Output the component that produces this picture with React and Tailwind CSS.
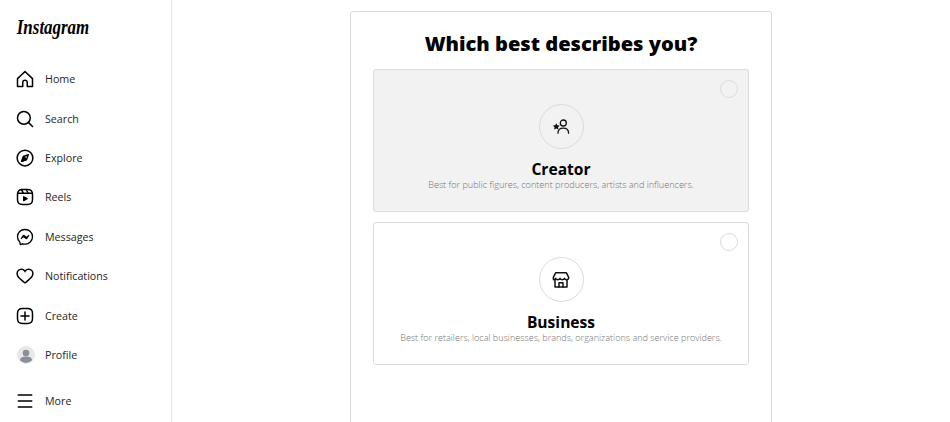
const navItems = [
  { label: 'Home', icon: HomeIcon },
  { label: 'Search', icon: SearchIcon },
  { label: 'Explore', icon: ExploreIcon },
  { label: 'Reels', icon: ReelsIcon },
  { label: 'Messages', icon: MessagesIcon },
  { label: 'Notifications', icon: HeartIcon },
  { label: 'Create', icon: CreateIcon },
  { label: 'Profile', icon: ProfileIcon },
];

function Icon({ children }) {
  return (
    <svg viewBox="0 0 24 24" className="w-[18px] h-[18px] shrink-0 text-black" fill="none" stroke="currentColor" strokeWidth="2" strokeLinecap="round" strokeLinejoin="round">
      {children}
    </svg>
  );
}

function HomeIcon() {
  return (
    <Icon>
      <path d="M9.005 16.545a2.997 2.997 0 0 1 2.997-2.997A2.997 2.997 0 0 1 15 16.545V22h7V11.543L12 2 2 11.543V22h7.005Z" />
    </Icon>
  );
}

function SearchIcon() {
  return (
    <Icon>
      <path d="M19 10.5A8.5 8.5 0 1 1 10.5 2a8.5 8.5 0 0 1 8.5 8.5Z" />
      <line x1="16.511" y1="16.511" x2="22" y2="22" />
    </Icon>
  );
}

function ExploreIcon() {
  return (
    <Icon>
      <polygon points="13.941 13.953 7.581 16.424 10.06 10.056 16.42 7.585 13.941 13.953" />
      <polygon fill="currentColor" points="10.06 10.056 13.949 13.945 7.581 16.424 10.06 10.056" />
      <circle cx="12.001" cy="12.005" r="10.5" />
    </Icon>
  );
}

function ReelsIcon() {
  return (
    <Icon>
      <line x1="2.049" y1="7.002" x2="21.95" y2="7.002" />
      <line x1="13.504" y1="2.001" x2="16.362" y2="7.002" />
      <line x1="7.207" y1="2.11" x2="10.002" y2="7.002" />
      <path d="M2 12.001v3.449c0 2.849.698 4.006 1.606 4.945.94.908 2.098 1.607 4.946 1.607h6.896c2.848 0 4.006-.699 4.946-1.607.908-.939 1.606-2.096 1.606-4.945V8.552c0-2.848-.698-4.006-1.606-4.945C19.454 2.699 18.296 2 15.448 2H8.552c-2.848 0-4.006.699-4.946 1.607C2.698 4.546 2 5.704 2 8.552Z" />
      <path fill="currentColor" stroke="none" d="M9.763 17.664a.908.908 0 0 1-.454-.787V11.63a.909.909 0 0 1 1.364-.788l4.545 2.624a.909.909 0 0 1 0 1.575l-4.545 2.624a.91.91 0 0 1-.91 0Z" />
    </Icon>
  );
}

function MessagesIcon() {
  return (
    <Icon>
      <path strokeWidth="1.739" d="M12.003 2.001a9.705 9.705 0 1 1 0 19.4 10.876 10.876 0 0 1-2.895-.384.798.798 0 0 0-.533.04l-1.984.876a.801.801 0 0 1-1.123-.708l-.054-1.78a.806.806 0 0 0-.27-.569 9.49 9.49 0 0 1-3.14-7.175 9.65 9.65 0 0 1 10-9.7Z" />
      <path fill="currentColor" stroke="none" d="M17.79 10.132a.659.659 0 0 0-.962-.873l-2.556 2.05a.63.63 0 0 1-.758.002L11.06 9.47a1.576 1.576 0 0 0-2.277.42l-2.567 3.98a.659.659 0 0 0 .961.875l2.556-2.049a.63.63 0 0 1 .759-.002l2.452 1.84a1.576 1.576 0 0 0 2.278-.42Z" />
    </Icon>
  );
}

function HeartIcon() {
  return (
    <Icon>
      <path fill="currentColor" stroke="none" d="M16.792 3.904A4.989 4.989 0 0 1 21.5 9.122c0 3.072-2.652 4.959-5.197 7.222-2.512 2.243-3.865 3.469-4.303 3.752-.477-.309-2.143-1.823-4.303-3.752C5.141 14.072 2.5 12.167 2.5 9.122a4.989 4.989 0 0 1 4.708-5.218 4.21 4.21 0 0 1 3.675 1.941c.84 1.175.98 1.763 1.12 1.763s.278-.588 1.11-1.766a4.17 4.17 0 0 1 3.679-1.938m0-2a6.04 6.04 0 0 0-4.797 2.127 6.052 6.052 0 0 0-4.787-2.127A6.985 6.985 0 0 0 .5 9.122c0 3.61 2.55 5.827 5.015 7.97.283.246.569.494.853.747l1.027.918a44.998 44.998 0 0 0 3.518 3.018 2 2 0 0 0 2.174 0 45.263 45.263 0 0 0 3.626-3.115l.922-.824c.293-.26.59-.519.885-.774 2.334-2.025 4.98-4.32 4.98-7.94a6.985 6.985 0 0 0-6.708-7.218Z" />
    </Icon>
  );
}

function CreateIcon() {
  return (
    <Icon>
      <path d="M2 12v3.45c0 2.849.698 4.005 1.606 4.944.94.909 2.098 1.608 4.946 1.608h6.896c2.848 0 4.006-.7 4.946-1.608C21.302 19.455 22 18.3 22 15.45V8.552c0-2.849-.698-4.006-1.606-4.945C19.454 2.7 18.296 2 15.448 2H8.552c-2.848 0-4.006.699-4.946 1.607C2.698 4.547 2 5.703 2 8.552Z" />
      <line x1="6.545" y1="12" x2="17.455" y2="12" />
      <line x1="12.003" y1="6.545" x2="12.003" y2="17.455" />
    </Icon>
  );
}

function ProfileIcon() {
  return (
    <svg viewBox="0 0 18 18" className="w-[18px] h-[18px] shrink-0 ml-[1px] mr-[-1px]">
      <circle cx="9" cy="9" r="9" fill="#e8e8ea" />
      <circle cx="9" cy="7" r="3.3" fill="#8b8f9a" />
      <path d="M3 14.2c0-2.6 2.6-3.7 6-3.7s6 1.1 6 3.7A8.6 8.6 0 0 1 9 17a8.6 8.6 0 0 1-6-2.8Z" fill="#8b8f9a" />
    </svg>
  );
}

function CreatorIcon() {
  return (
    <svg viewBox="0 0 18 18" className="w-[18px] h-[18px]" fill="none" stroke="#111" strokeWidth="1.3" strokeLinecap="round" strokeLinejoin="round">
      <circle cx="11.3" cy="5" r="3" />
      <path d="M6 15.2c0-3.3 2.2-5 5.3-5s5.3 1.7 5.3 5" />
      <path fill="#111" stroke="none" d="M4.3 5.2l1.1 2 2.3.4-1.6 1.6.3 2.3-2.1-1-2.1 1 .3-2.3L.9 7.6l2.3-.4Z" />
    </svg>
  );
}

function StoreIcon() {
  return (
    <svg viewBox="0 0 18 18" className="w-[18px] h-[18px]" fill="none" stroke="#111" strokeWidth="1.5" strokeLinecap="round" strokeLinejoin="round">
      <path d="M3.6 1.8h10.8l2.3 4.6c0 1.3-1 2.3-2.2 2.3-.9 0-1.7-.5-2.1-1.3-.4.8-1.3 1.3-2.2 1.3s-1.8-.5-2.2-1.3c-.4.8-1.3 1.3-2.2 1.3S4 8.2 3.6 7.4C3.2 8.2 2.4 8.7 1.5 8.7c-.2 0-.2-1.3-.2-2.3Z" />
      <path d="M3 9v7h12V9" />
      <path d="M7 16v-4.2h4V16" />
    </svg>
  );
}

function TypeCard({ title, description, icon, selected }) {
  return (
    <div className={`relative h-[142.5px] flex flex-col items-center border border-[#dbdbdb] rounded-[3px] pt-[34px] ${selected ? 'bg-[#f2f2f2]' : 'bg-white'}`}>
      <div className="absolute top-[10px] right-[10.5px] w-[17.5px] h-[17.5px] rounded-full border border-[#dbdbdb]" />
      <div className="w-[45px] h-[45px] rounded-full border border-[#dbdbdb] flex items-center justify-center">
        {icon}
      </div>
      <h2 className="mt-[10px] text-[15.6px] leading-[20px] font-bold text-black">{title}</h2>
      <p className="text-[9.08px] leading-[12px] font-light text-[#737373]">{description}</p>
    </div>
  );
}

export default function App() {
  return (
    <div className="h-[422px] flex overflow-hidden bg-white font-['Open_Sans','Noto_Sans',sans-serif]">
      <aside className="w-[172px] shrink-0 border-r border-[#e6e6e6] flex flex-col pl-[16px]">
        <div className="h-[59.5px] pt-[12px] pl-[1px] font-['Liberation_Serif',serif] italic font-bold text-[22px] leading-[30px] text-black origin-left scale-x-[0.77]">Instagram</div>
        <nav className="flex flex-col">
          {navItems.map(({ label, icon: ItemIcon }) => (
            <a key={label} href="#" className="h-[39.4px] flex items-center gap-[11px] text-[10.7px] text-[#262626]">
              <ItemIcon />
              <span>{label}</span>
            </a>
          ))}
        </nav>
        <a href="#" className="mt-[6.5px] h-[39.4px] flex items-center gap-[11px] text-[10.7px] text-[#262626]">
          <Icon>
            <line x1="3" y1="4" x2="21" y2="4" />
            <line x1="3" y1="12" x2="21" y2="12" />
            <line x1="3" y1="20" x2="21" y2="20" />
          </Icon>
          <span>More</span>
        </a>
      </aside>
      <main className="flex-1 min-w-0 pl-[178px] pt-[11px]">
        <section className="w-[422px] h-[440px] border border-[#dbdbdb] rounded-[3px] px-[22px]">
          <h1 className="h-[57px] pt-[17px] text-center text-[20.1px] leading-[30px] font-black text-black">Which best describes you?</h1>
          <div className="flex flex-col gap-[10.5px]">
            <TypeCard selected title="Creator" description="Best for public figures, content producers, artists and influencers." icon={<CreatorIcon />} />
            <TypeCard title="Business" description="Best for retailers, local businesses, brands, organizations and service providers." icon={<StoreIcon />} />
          </div>
        </section>
      </main>
    </div>
  );
}
